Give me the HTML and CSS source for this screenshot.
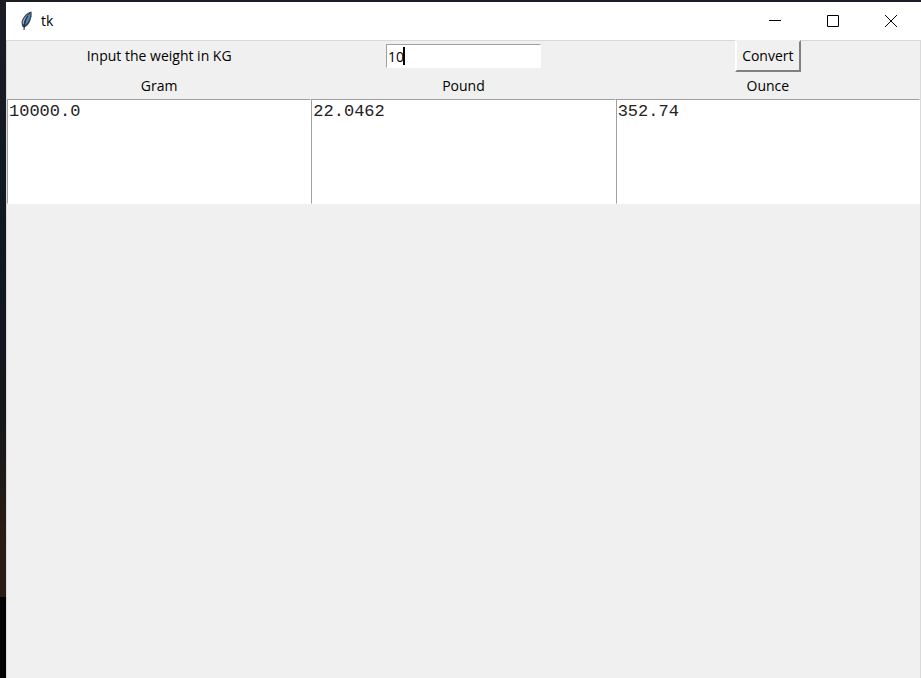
FILE: index.html
```html
<!DOCTYPE html>
<html lang="en">
<head>
<meta charset="utf-8">
<title>tk</title>
<link rel="stylesheet" href="styles.css">
</head>
<body>
<div class="window">
  <header class="titlebar">
    <svg class="feather" width="14" height="20" viewBox="0 0 14 20" aria-hidden="true">
      <path d="M11.500 .5C7 1.500 3 5.500 1.500 11l.5 4 2 2L6 15.500C9.500 13 12 8 11.500 .5z" fill="#39424d"/>
      <path d="M10.500 2C7 5 5.500 8 4.500 14.500 8.500 11.500 10.500 7 10.500 2z" fill="#4b8bd0"/>
      <path d="M9 2.500C5.500 5 3 8 2.500 12l1 1.500C4 9 6 5.500 9 2.500z" fill="#a9b9c8"/>
      <path d="M8 5C5.500 9 4.500 12 4 19" fill="none" stroke="#202a35"/>
      <path d="M11.500 1v5" fill="none" stroke="#8b8b88"/>
    </svg>
    <h1 class="title">tk</h1>
    <div class="controls">
      <button class="control" type="button" aria-label="Minimize">
        <svg width="12" height="12" viewBox="0 0 12 12"><path d="M0 5.500h12"/></svg>
      </button>
      <button class="control" type="button" aria-label="Maximize">
        <svg width="12" height="12" viewBox="0 0 12 12"><path d="M.5 .5h11v11H.5z"/></svg>
      </button>
      <button class="control" type="button" aria-label="Close">
        <svg width="12" height="12" viewBox="0 0 12 12"><path d="M0 0l12 12M12 0L0 12"/></svg>
      </button>
    </div>
  </header>
  <main class="content">
    <form class="grid">
      <label class="cell entry-row" for="weight">Input the weight in KG</label>
      <div class="cell entry-row">
        <span class="entry">
          <input class="entry-input" id="weight" type="text" value="10">
          <span class="caret"></span>
        </span>
      </div>
      <div class="cell entry-row"><button class="convert" type="button">Convert</button></div>
      <label class="cell label-row" for="gram">Gram</label>
      <label class="cell label-row" for="pound">Pound</label>
      <label class="cell label-row" for="ounce">Ounce</label>
      <textarea class="result" id="gram" spellcheck="false">10000.0</textarea>
      <textarea class="result" id="pound" spellcheck="false">22.0462</textarea>
      <textarea class="result" id="ounce" spellcheck="false">352.74</textarea>
    </form>
  </main>
</div>
</body>
</html>
```
FILE: styles.css
```css
* {
  box-sizing: border-box;
}

body {
  margin: 0;
  min-height: 100vh;
  padding: 2px 0 0 6px;
  display: flex;
  background: linear-gradient(#1c1d24 0, #101820 30%, #12171b 60%, #2a1c12 80%, #2a1c12 88%, #020202 88%);
  color: #000;
  font: 14px/20px "Open Sans", "Noto Sans", sans-serif;
}

.window {
  flex: 1;
  display: flex;
  flex-direction: column;
  background: #f0f0f0;
}

.titlebar {
  display: flex;
  align-items: center;
  height: 38px;
  padding-left: 14px;
  background: #fff;
}

.title {
  margin: 0 0 0 7px;
  font-size: 14px;
  font-weight: 400;
}

.controls {
  display: flex;
  align-self: stretch;
  margin-left: auto;
  padding-right: 1px;
}

.control {
  display: flex;
  align-items: center;
  justify-content: center;
  width: 58px;
  padding: 0;
  border: 0;
  background: transparent;
}

.control path {
  fill: none;
  stroke: #000;
}

.content {
  flex: 1;
  border: 1px solid #d9d9d9;
  border-bottom: 0;
}

.grid {
  display: grid;
  grid-template-columns: repeat(3, 1fr);
}

.cell {
  display: flex;
  align-items: center;
  justify-content: center;
}

.entry-row {
  height: 30px;
}

.label-row {
  height: 28px;
  padding-top: 2px;
}

.entry {
  position: relative;
  display: flex;
}

.entry-input {
  width: 155px;
  height: 24px;
  padding: 0 1px;
  border: 1px solid #fff;
  border-top-color: #a0a0a0;
  border-left-color: #a0a0a0;
  border-radius: 0;
  outline: 0;
  background: #fff;
  font: inherit;
}

.caret {
  position: absolute;
  top: 3px;
  left: 17px;
  width: 2px;
  height: 18px;
  background: #000;
}

.convert {
  height: 32px;
  padding: 0 5px;
  border: 2px solid #fff;
  border-right-color: #808080;
  border-bottom-color: #808080;
  border-top-color: #f0f0f0;
  background: #f0f0f0;
  color: #000;
  font: inherit;
}

.result {
  display: block;
  width: 100%;
  height: 105px;
  margin: 0;
  padding: 2px 1px;
  border: 1px solid #fff;
  border-top-color: #a0a0a0;
  border-left-color: #a0a0a0;
  border-radius: 0;
  outline: 0;
  resize: none;
  background: #fff;
  color: #222;
  font: 17px/20px "Liberation Mono", monospace;
}
```
